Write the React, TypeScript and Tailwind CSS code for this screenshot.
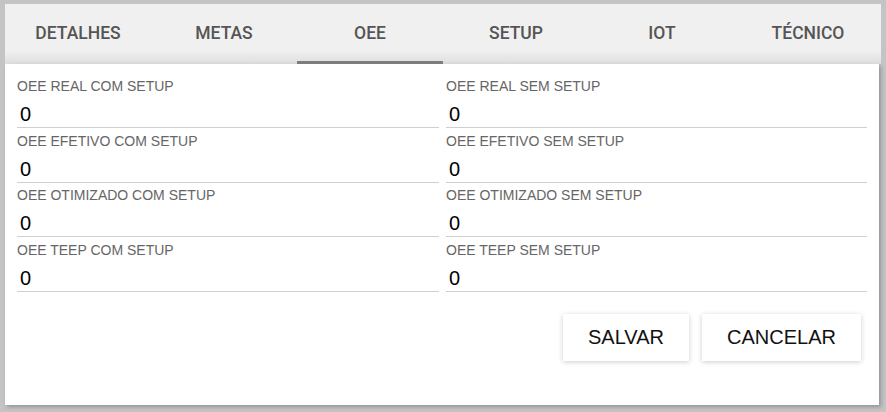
const tabs = ['DETALHES', 'METAS', 'OEE', 'SETUP', 'IOT', 'TÉCNICO']

const fields = [
  ['OEE REAL COM SETUP', 'OEE REAL SEM SETUP'],
  ['OEE EFETIVO COM SETUP', 'OEE EFETIVO SEM SETUP'],
  ['OEE OTIMIZADO COM SETUP', 'OEE OTIMIZADO SEM SETUP'],
  ['OEE TEEP COM SETUP', 'OEE TEEP SEM SETUP'],
]

function Field({ label }: { label: string }) {
  return (
    <div className="flex flex-col">
      <label className="h-4 text-[14px] leading-4 text-[#666] font-['Liberation_Sans',Arial,sans-serif]">
        {label}
      </label>
      <div className="mt-[7px] h-[27px] pl-[3px] text-[20px] leading-[26px] text-black border-b border-[#cfcfcf] font-['Liberation_Sans',Arial,sans-serif]">
        0
      </div>
    </div>
  )
}

export default function App() {
  return (
    <div className="w-[886px] h-[412px] bg-[#c4c4c4] pl-[5px] pt-[4px] overflow-hidden">
      <div className="w-[876px]">
        <div className="flex h-[60px] bg-[linear-gradient(to_bottom,#f0f0f0_0%,#f0f0f0_78%,#dedede_100%)]">
          {tabs.map((t) => (
            <div
              key={t}
              className={`relative flex-1 flex items-center justify-center text-[17.5px] font-medium text-[#555] font-['Roboto',sans-serif] ${
                t === 'OEE' ? 'after:absolute after:left-0 after:right-0 after:bottom-0 after:h-[3px] after:bg-[#7d7d7d]' : ''
              }`}
            >
              <span className="-mt-[1px]">{t}</span>
            </div>
          ))}
        </div>
        <div className="w-[874px] h-[341px] bg-white shadow-[2px_2px_4px_rgba(0,0,0,0.25)] px-[12px] pt-[14px] flex flex-col">
          <div className="grid grid-cols-[422px_421px] gap-x-[7px] gap-y-[4.5px]">
            {fields.map(([a, b]) => (
              <>
                <Field key={a} label={a} />
                <Field key={b} label={b} />
              </>
            ))}
          </div>
          <div className="flex justify-end gap-[13px] mt-[22px] pr-[6px]">
            <button className="w-[126px] h-[47px] bg-white shadow-[0_1px_5px_rgba(0,0,0,0.2)] text-[20px] text-[#111] font-['Liberation_Sans',Arial,sans-serif]">
              SALVAR
            </button>
            <button className="w-[159px] h-[47px] bg-white shadow-[0_1px_5px_rgba(0,0,0,0.2)] text-[20px] text-[#111] font-['Liberation_Sans',Arial,sans-serif]">
              CANCELAR
            </button>
          </div>
        </div>
      </div>
    </div>
  )
}
